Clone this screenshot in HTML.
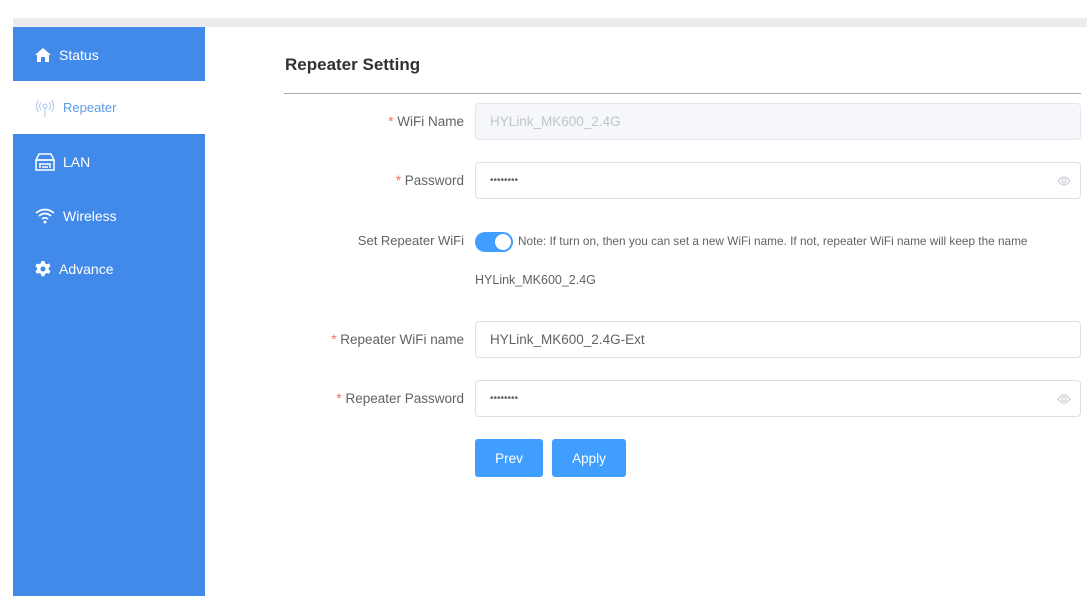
<!DOCTYPE html>
<html><head><meta charset="utf-8"><style>
*{box-sizing:border-box;margin:0;padding:0}
body{width:1087px;height:596px;overflow:hidden;background:#fff;font-family:"Liberation Sans",Arial,sans-serif;position:relative;color:#606266}
.topbar{position:absolute;left:13px;top:18px;width:1074px;height:9px;background:#ebeced}
.side{position:absolute;left:13px;top:27px;width:192px;height:569px;background:#418aea}
.item{position:absolute;left:0;width:192px;height:53px;color:#fff;font-size:14px;display:flex;align-items:center;padding-left:22px}
.item svg{margin-right:8px}
.item.act{background:#fff;color:#5a9bea;font-size:13px}
h2{position:absolute;left:285px;top:55px;font-size:17px;color:#303133;font-weight:bold}
.hr{position:absolute;left:284px;top:93px;width:797px;height:1px;background:#aaa}
.lbl{position:absolute;right:623px;font-size:13.5px;color:#606266;white-space:nowrap}
.lbl b{color:#f56c6c;font-weight:normal}
.inp{position:absolute;left:475px;width:606px;height:37px;border:1px solid #dcdfe6;border-radius:4px;font-size:13.5px;padding-left:14px;display:flex;align-items:center;color:#606266}
.inp.dis{background:#f5f7fa;border-color:#e4e7ed;color:#c0c4cc}
.pw{font-size:10px;letter-spacing:0}
.eye{position:absolute;right:9px;top:12px}
.btn{position:absolute;top:439px;height:38px;background:#409eff;color:#fff;font-size:13.5px;border-radius:3px;display:flex;align-items:center;justify-content:center}
</style></head><body>
<div class="topbar"></div>
<div class="side">
 <div class="item" style="top:1px"><svg width="16" height="14" viewBox="0 0 16 14"><path d="M8 0L0 7h2v7h4V9h4v5h4V7h2z" fill="#fff"/></svg>Status</div>
 <div class="item act" style="top:54px"><svg width="20" height="20" viewBox="0 0 20 20" fill="none" stroke="#a9c4ee" stroke-width="1"><circle cx="10" cy="8" r="2"/><path d="M10 10v9M6 4q-3 4 0 8M14 4q3 4 0 8M3.5 2q-4 6 0 12M16.5 2q4 6 0 12"/></svg>Repeater</div>
 <div class="item" style="top:108px"><svg width="20" height="18" viewBox="0 0 20 18" fill="none" stroke="#fff" stroke-width="1.5"><path d="M4 1h12l3 6H1z"/><rect x="1" y="7" width="18" height="10"/><path d="M5 15v-4h10v4M8 13v2M10 13v2M12 13v2"/></svg>LAN</div>
 <div class="item" style="top:162px"><svg width="20" height="16" viewBox="0 0 20 16" fill="none" stroke="#fff" stroke-width="1.6"><path d="M1 5q9-7 18 0M4 8q6-5 12 0M7 11q3-2.5 6 0"/><circle cx="10" cy="14" r="1.5" fill="#fff" stroke="none"/></svg>Wireless</div>
 <div class="item" style="top:215px"><svg width="16" height="16" viewBox="0 0 16 16"><path d="M6.5 0h3l.5 2.3 1.8 1 2.2-.8 1.5 2.6-1.8 1.5v2.1l1.8 1.5-1.5 2.6-2.2-.8-1.8 1-.5 2.3h-3l-.5-2.3-1.8-1-2.2.8L.3 10.3l1.8-1.5V6.7L.3 5.1 1.8 2.5l2.2.8 1.8-1z" fill="#fff"/><circle cx="8" cy="8" r="2.5" fill="#418aea"/></svg>Advance</div>
</div>
<h2>Repeater Setting</h2>
<div class="hr"></div>
<div class="lbl" style="top:114px"><b>*</b> WiFi Name</div>
<div class="inp dis" style="top:103px">HYLink_MK600_2.4G</div>
<div class="lbl" style="top:173px"><b>*</b> Password</div>
<div class="inp" style="top:162px"><span class="pw">••••••••</span><svg class="eye" width="14" height="12" viewBox="0 0 14 12" fill="none" stroke="#c0c4cc"><path d="M1 6q6-8 12 0q-6 8-12 0z"/><circle cx="7" cy="6" r="2"/></svg></div>
<div class="lbl" style="top:233px;font-size:13px">Set Repeater WiFi</div>
<div style="position:absolute;left:475px;top:232px;width:38px;height:20px;border-radius:10px;background:#409eff"><div style="position:absolute;right:2px;top:2px;width:16px;height:16px;border-radius:50%;background:#fff"></div></div>
<div style="position:absolute;left:518px;top:234px;font-size:11.8px;color:#606266;white-space:nowrap">Note: If turn on, then you can set a new WiFi name. If not, repeater WiFi name will keep the name</div>
<div style="position:absolute;left:475px;top:273px;font-size:12.5px;color:#606266">HYLink_MK600_2.4G</div>
<div class="lbl" style="top:332px"><b>*</b> Repeater WiFi name</div>
<div class="inp" style="top:321px">HYLink_MK600_2.4G-Ext</div>
<div class="lbl" style="top:391px"><b>*</b> Repeater Password</div>
<div class="inp" style="top:380px"><span class="pw">••••••••</span><svg class="eye" width="14" height="12" viewBox="0 0 14 12" fill="none" stroke="#c0c4cc"><path d="M1 6q6-8 12 0q-6 8-12 0z"/><circle cx="7" cy="6" r="2"/></svg></div>
<div class="btn" style="left:475px;width:68px">Prev</div>
<div class="btn" style="left:552px;width:74px">Apply</div>
</body></html>
